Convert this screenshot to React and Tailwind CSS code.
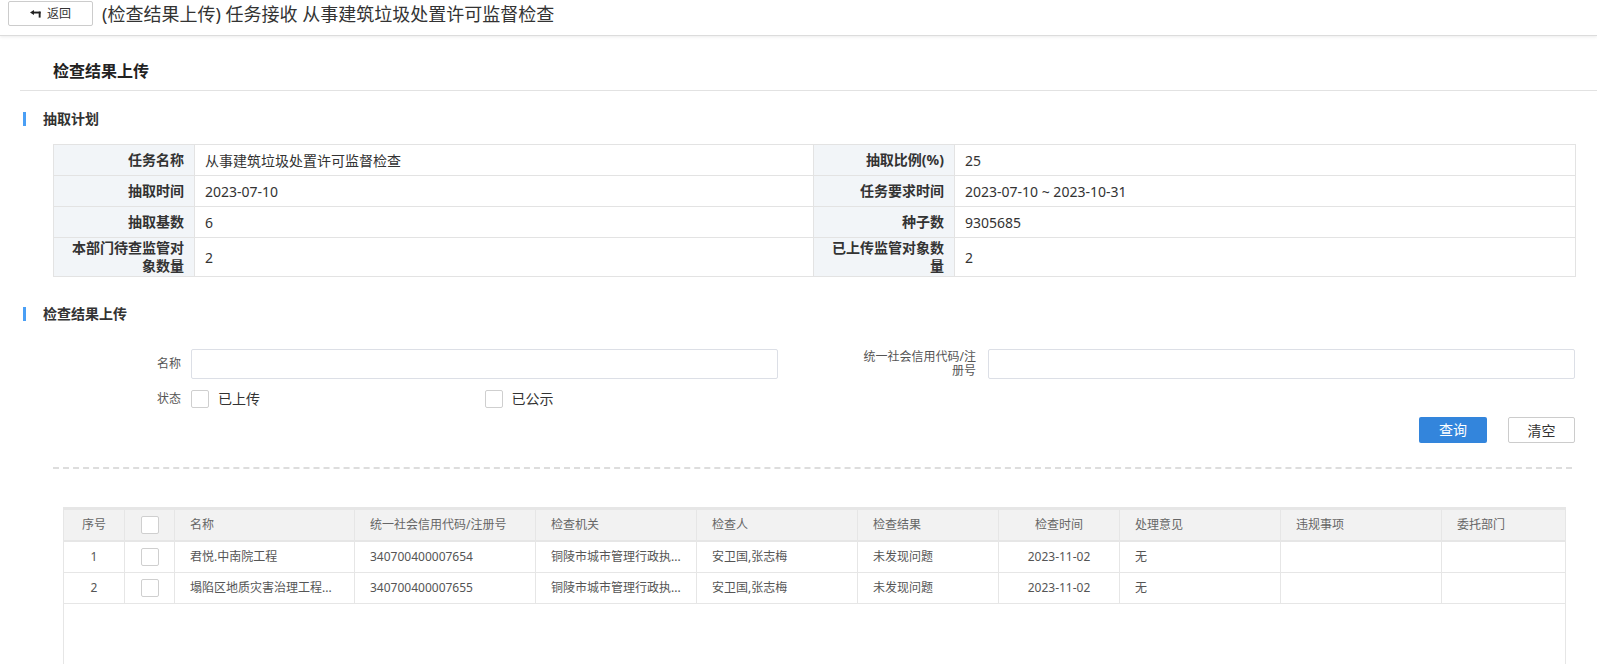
import React from "react";

function Box({ className = "" }) {
  return <span className={"block w-[18px] h-[18px] border border-[#cfcfcf] rounded-[2px] bg-white " + className} />;
}

function SectionTitle({ children, className = "" }) {
  return (
    <div className={"flex items-center h-[20px] " + className}>
      <span className="ml-[23px] block w-[3px] h-[14px] bg-[#4a9ff5]" />
      <span className="ml-[17px] text-[14px] font-bold text-[#333] leading-[20px]">{children}</span>
    </div>
  );
}

const planRows = [
  ["任务名称", "从事建筑垃圾处置许可监督检查", "抽取比例(%)", "25", "h-[31px]"],
  ["抽取时间", "2023-07-10", "任务要求时间", "2023-07-10 ~ 2023-10-31", "h-[31px]"],
  ["抽取基数", "6", "种子数", "9305685", "h-[31px]"],
  ["本部门待查监管对象数量", "2", "已上传监管对象数量", "2", "h-[39px]"],
];

const colsCls = "grid grid-cols-[61px_50px_180px_181px_161px_161px_141px_121px_161px_161px_123px]";

const headers = ["序号", "", "名称", "统一社会信用代码/注册号", "检查机关", "检查人", "检查结果", "检查时间", "处理意见", "违规事项", "委托部门"];
const centerCols = [0, 1, 7];

const rows = [
  ["1", "", "君悦.中南院工程", "340700400007654", "铜陵市城市管理行政执...", "安卫国,张志梅", "未发现问题", "2023-11-02", "无", "", ""],
  ["2", "", "塌陷区地质灾害治理工程...", "340700400007655", "铜陵市城市管理行政执...", "安卫国,张志梅", "未发现问题", "2023-11-02", "无", "", ""],
];

function Cell({ i, children, last, header }) {
  const center = centerCols.includes(i);
  return (
    <div
      className={
        "flex items-center overflow-hidden whitespace-nowrap text-[12px] " +
        (header ? "h-[30px] text-[#666] " : "h-[31px] text-[#555] border-b border-[#e6e6e6] ") +
        (last ? "" : "border-r border-[#e6e6e6] ") +
        (center ? "justify-center" : "pl-[15px]")
      }
    >
      {i === 1 ? <Box /> : children}
    </div>
  );
}

export default function App() {
  return (
    <div className="w-[1597px] h-[664px] overflow-hidden bg-white font-['Noto_Sans','Noto_Sans_CJK_SC',sans-serif] text-[#333]">
      {/* Top bar */}
      <div className="h-[36px] flex items-start pt-[1px] pl-[8px] border-b border-[#dcdcdc] shadow-[0_1px_3px_rgba(0,0,0,0.08)]">
        <button className="h-[25px] w-[85px] border border-[#cccccc] rounded-[2px] bg-white flex items-center justify-center gap-[6px] text-[12px] text-[#333]">
          <svg width="11" height="8" viewBox="0 0 11 8" className="block">
            <path d="M0 2.5 L4 0 L4 5 Z" fill="#222" />
            <rect x="3" y="1.6" width="7.6" height="1.9" fill="#222" />
            <rect x="8.7" y="1.6" width="1.9" height="6" fill="#222" />
          </svg>
          <span className="leading-[16px]">返回</span>
        </button>
        <div className="ml-[9px] text-[18px] leading-[27px] text-[#333]">(检查结果上传) 任务接收 从事建筑垃圾处置许可监督检查</div>
      </div>

      {/* Heading */}
      <div className="ml-[20px] mt-[24px] pl-[33px] pb-[8px] border-b border-[#e2e2e2]">
        <div className="text-[16px] font-bold leading-[22px] text-[#222]">检查结果上传</div>
      </div>

      <SectionTitle className="mt-[18px]">抽取计划</SectionTitle>

      {/* Plan table */}
      <div className="ml-[53px] mr-[21px] mt-[15px] border-t border-l border-[#e3e3e3] grid grid-cols-[141px_619px_141px_1fr]">
        {planRows.map((r, idx) => (
          <React.Fragment key={idx}>
            <div className={r[4] + " bg-[#f2f5f8] border-r border-b border-[#e3e3e3] flex items-center justify-end px-[10px]"}>
              <span className="text-right text-[14px] font-bold leading-[18px] text-[#333]">{r[0]}</span>
            </div>
            <div className={r[4] + " border-r border-b border-[#e3e3e3] flex items-center pl-[10px] text-[14px] text-[#333]"}>{r[1]}</div>
            <div className={r[4] + " bg-[#f2f5f8] border-r border-b border-[#e3e3e3] flex items-center justify-end px-[10px]"}>
              <span className="text-right text-[14px] font-bold leading-[18px] text-[#333]">{r[2]}</span>
            </div>
            <div className={r[4] + " border-r border-b border-[#e3e3e3] flex items-center pl-[10px] text-[14px] text-[#333]"}>{r[3]}</div>
          </React.Fragment>
        ))}
      </div>

      <SectionTitle className="mt-[27px]">检查结果上传</SectionTitle>

      {/* Form */}
      <div className="ml-[53px] mt-[25px] flex items-center">
        <div className="w-[138px] pr-[10px] text-right text-[12px] text-[#555]">名称</div>
        <div className="w-[587px] h-[30px] border border-[#dcdfe6] rounded-[2px] bg-white" />
        <div className="w-[210px] pr-[12px] flex justify-end">
          <div className="w-[115px] text-right text-[12px] leading-[14px] text-[#555]">统一社会信用代码/注册号</div>
        </div>
        <div className="w-[587px] h-[30px] border border-[#dcdfe6] rounded-[2px] bg-white" />
      </div>

      <div className="ml-[53px] mt-[9px] flex items-center">
        <div className="w-[138px] pr-[10px] text-right text-[12px] text-[#555]">状态</div>
        <div className="w-[587px] grid grid-cols-2">
          <div className="flex items-center">
            <Box className="border-[#c4c4c4]" />
            <span className="ml-[9px] text-[14px] text-[#333]">已上传</span>
          </div>
          <div className="flex items-center">
            <Box className="border-[#c4c4c4]" />
            <span className="ml-[9px] text-[14px] text-[#333]">已公示</span>
          </div>
        </div>
      </div>

      <div className="mt-[8px] mr-[22px] flex justify-end gap-[21px]">
        <button className="w-[68px] h-[26px] rounded-[2px] bg-[#3385dc] text-white text-[14px] leading-[26px]">查询</button>
        <button className="w-[67px] h-[26px] rounded-[2px] bg-white border border-[#cccccc] text-[#333] text-[14px]">清空</button>
      </div>

      <div className="ml-[53px] mr-[25px] mt-[24px] border-t-2 border-dashed border-[#dddddd]" />

      {/* Result table */}
      <div className="ml-[63px] mt-[38px] w-[1503px] h-[300px] border-x border-[#e6e6e6]">
        <div className={colsCls + " bg-[#f2f2f2] border-t-[3px] border-b-2 border-[#e6e6e6]"}>
          {headers.map((h, i) => (
            <Cell key={i} i={i} header last={i === headers.length - 1}>{h}</Cell>
          ))}
        </div>
        {rows.map((r, ri) => (
          <div key={ri} className={colsCls}>
            {r.map((c, i) => (
              <Cell key={i} i={i} last={i === r.length - 1}>{c}</Cell>
            ))}
          </div>
        ))}
      </div>
    </div>
  );
}
